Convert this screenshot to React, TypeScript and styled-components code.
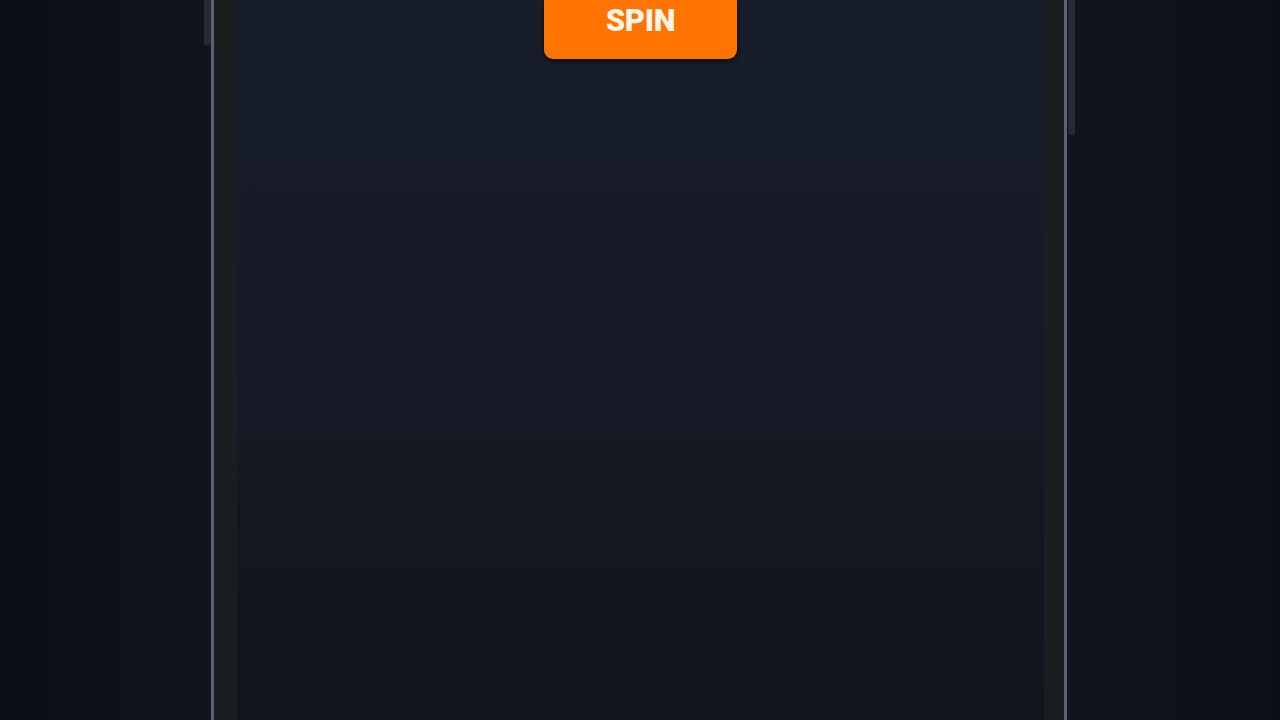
import React from "react";
import styled, { createGlobalStyle } from "styled-components";

const Global = createGlobalStyle`
  html, body { margin: 0; padding: 0; height: 100%; }
  body {
    background: #0f1219;
    font-family: "Roboto", "Liberation Sans", sans-serif;
    overflow: hidden;
  }
  #root { height: 100%; }
`;

const Page = styled.div`
  width: 1280px;
  height: 720px;
  display: flex;
  justify-content: center;
  background: linear-gradient(90deg, #0b0e14 0%, #10141c 15%, #121620 50%, #10141c 85%, #0c0f15 100%);
`;

const Phone = styled.div`
  position: relative;
  width: 856px;
  height: 720px;
  margin-left: -2px;
  display: flex;
  box-sizing: border-box;
  border-left: 3px solid #5e626c;
  border-right: 3px solid #5e626c;
  background: #1b1d21;
  padding: 0 20px 0 23px;
`;

const SideKey = styled.div<{ $side: "left" | "right"; $h: number }>`
  position: absolute;
  top: 0;
  ${(p) => (p.$side === "left" ? "left: -10px;" : "right: -11px;")}
  width: 7px;
  height: ${(p) => p.$h}px;
  background: #272a31;
  border-radius: 0 0 3px 3px;
`;

const Screen = styled.div`
  flex: 1;
  display: flex;
  flex-direction: column;
  align-items: center;
  background: linear-gradient(180deg, #181d2a 0%, #161b27 40%, #131722 75%, #11151e 100%);
`;

const SpinButton = styled.button`
  width: 193px;
  height: 59px;
  border: none;
  border-radius: 0 0 9px 9px;
  background: #ff7300;
  color: #fff4e8;
  font-family: "Roboto", "Liberation Sans", sans-serif;
  font-weight: 900;
  font-size: 31px;
  letter-spacing: -0.3px;
  padding: 0 0 18px;
  box-shadow: 0 2px 4px rgba(0, 0, 0, 0.6);
  cursor: pointer;
`;

export default function App() {
  return (
    <>
      <Global />
      <Page>
        <Phone>
          <SideKey $side="left" $h={45} />
          <SideKey $side="right" $h={135} />
          <Screen>
            <SpinButton>SPIN</SpinButton>
          </Screen>
        </Phone>
      </Page>
    </>
  );
}
